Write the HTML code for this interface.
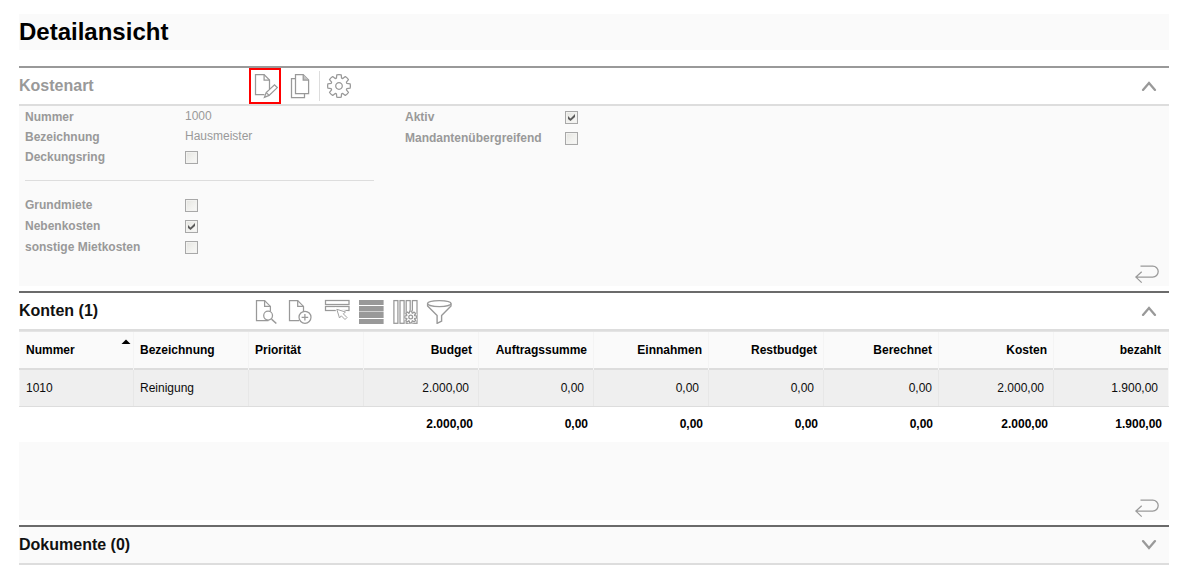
<!DOCTYPE html>
<html lang="de">
<head>
<meta charset="utf-8">
<title>Detailansicht</title>
<style>
html,body{margin:0;padding:0;background:#fff;}
body{width:1186px;height:571px;position:relative;overflow:hidden;font-family:"Liberation Sans",Arial,sans-serif;font-size:12px;color:#0c0c0c;}
.abs{position:absolute;}
.t{position:absolute;white-space:nowrap;line-height:14px;height:14px;}
.bg{position:absolute;left:19px;width:1150px;}
h1{position:absolute;left:19px;top:14px;width:1150px;height:36px;margin:0;background:#fafafa;font-size:24px;font-weight:bold;line-height:36px;color:#000;}
.sh{position:absolute;left:19px;font-size:16px;font-weight:bold;line-height:36px;height:36px;margin:0;}
.lbl{font-weight:bold;color:#999;}
.val{color:#999;}
.cb{position:absolute;width:11px;height:11px;border:1px solid #a8a8a8;background:linear-gradient(135deg,#e4e4e0 0%,#f1f1ee 55%,#f8f8f7 100%);box-shadow:inset 0 0 0 1px #f2f2f0;}
.cb svg{position:absolute;left:0;top:0;}
.th{font-weight:bold;color:#000;}
.r{text-align:right;}
.vline{position:absolute;width:1px;}
svg{position:absolute;overflow:visible;}
</style>
</head>
<body>

<h1><span style="position:relative;left:0px;">Detailansicht</span></h1>

<!-- ================= Section 1: Kostenart ================= -->
<div class="bg" style="top:66px;height:2px;background:#999;"></div>
<div class="bg" style="top:104px;height:2px;background:#dddddd;"></div>
<div class="bg" style="top:106px;height:180px;background:#fafafa;"></div>
<h2 class="sh" style="top:68px;color:#999;">Kostenart</h2>

<!-- toolbar -->
<div class="abs" style="left:249px;top:68px;width:28px;height:32px;border:2px solid #ff0000;"></div>
<svg id="ic-edit" style="left:253px;top:72px;" width="28" height="28" viewBox="253 72 28 28" fill="none" stroke="#999" stroke-width="1.25">
  <path d="M264.5 94.5H255.5V74.6H264.1L269.5 80V89"/>
  <path d="M264.1 74.6V80H269.5"/>
  <path d="M264.4 97.4L266.2 92.6L274.5 84.8L277.3 87.6L269.1 95.4Z"/>
  <path d="M266.2 92.6L269.1 95.4"/>
</svg>
<svg id="ic-copy" style="left:288px;top:72px;" width="28" height="28" viewBox="288 72 28 28" fill="none" stroke="#999" stroke-width="1.25">
  <path d="M295.5 78.5H291.5V97.5H304.5V94"/>
  <path d="M295.5 74.6H303.2L308.6 80V93.5H295.5Z"/>
  <path d="M303.2 74.6V80H308.6" fill="#c4c4c4"/>
</svg>
<div class="vline" style="left:319px;top:71px;height:30px;background:#ddd;"></div>
<svg id="ic-gear" style="left:326px;top:73px;" width="26" height="26" viewBox="-13 -13 26 26" fill="none" stroke="#999" stroke-width="1.25">
  <circle r="3.3"/>
  <path d="M7.89 -2.56L11.18 -2.22A11.4 11.4 0 0 1 11.18 2.22L7.89 2.56A8.3 8.3 0 0 1 7.40 3.77L7.40 3.77L9.48 6.33A11.4 11.4 0 0 1 6.33 9.48L3.77 7.40A8.3 8.3 0 0 1 2.56 7.89L2.56 7.89L2.22 11.18A11.4 11.4 0 0 1 -2.22 11.18L-2.56 7.89A8.3 8.3 0 0 1 -3.77 7.40L-3.77 7.40L-6.33 9.48A11.4 11.4 0 0 1 -9.48 6.33L-7.40 3.77A8.3 8.3 0 0 1 -7.89 2.56L-7.89 2.56L-11.18 2.22A11.4 11.4 0 0 1 -11.18 -2.22L-7.89 -2.56A8.3 8.3 0 0 1 -7.40 -3.77L-7.40 -3.77L-9.48 -6.33A11.4 11.4 0 0 1 -6.33 -9.48L-3.77 -7.40A8.3 8.3 0 0 1 -2.56 -7.89L-2.56 -7.89L-2.22 -11.18A11.4 11.4 0 0 1 2.22 -11.18L2.56 -7.89A8.3 8.3 0 0 1 3.77 -7.40L3.77 -7.40L6.33 -9.48A11.4 11.4 0 0 1 9.48 -6.33L7.40 -3.77A8.3 8.3 0 0 1 7.89 -2.56Z" stroke-linejoin="round"/>
</svg>
<svg style="left:1141px;top:80px;" width="16" height="12" viewBox="0 0 16 12" fill="none" stroke="#999" stroke-width="2.3" stroke-linecap="round"><path d="M2 9.9L8 3L14 9.9"/></svg>

<!-- left column -->
<div class="t lbl" style="left:25px;top:110px;">Nummer</div>
<div class="t val" style="left:185px;top:109px;">1000</div>
<div class="t lbl" style="left:25px;top:130px;">Bezeichnung</div>
<div class="t val" style="left:185px;top:129px;">Hausmeister</div>
<div class="t lbl" style="left:25px;top:150px;">Deckungsring</div>
<div class="cb" style="left:185px;top:151px;"></div>
<div class="abs" style="left:25px;top:180px;width:349px;height:1px;background:#ddd;"></div>
<div class="t lbl" style="left:25px;top:198px;">Grundmiete</div>
<div class="cb" style="left:185px;top:199px;"></div>
<div class="t lbl" style="left:25px;top:219px;">Nebenkosten</div>
<div class="cb" style="left:185px;top:220px;"><svg width="11" height="11" viewBox="0 0 11 11"><path d="M2 4L4.5 6.5L9 2V5L4.5 9L2 7Z" fill="#5c5c5c"/></svg></div>
<div class="t lbl" style="left:25px;top:240px;">sonstige Mietkosten</div>
<div class="cb" style="left:185px;top:241px;"></div>

<!-- right column -->
<div class="t lbl" style="left:405px;top:110px;">Aktiv</div>
<div class="cb" style="left:565px;top:111px;"><svg width="11" height="11" viewBox="0 0 11 11"><path d="M2 4L4.5 6.5L9 2V5L4.5 9L2 7Z" fill="#5c5c5c"/></svg></div>
<div class="t lbl" style="left:405px;top:131px;">Mandantenübergreifend</div>
<div class="cb" style="left:565px;top:132px;"></div>

<svg class="ret" style="left:1134px;top:264px;" width="26" height="20" viewBox="1134 264 26 20" fill="none" stroke="#999" stroke-width="1.25"><path d="M1140.5 266.1H1152.7A5.5 5.5 0 0 1 1152.7 277.1H1136M1141.7 271.8L1135.9 277.1L1141.7 282.6"/></svg>

<!-- ================= Section 2: Konten ================= -->
<div class="bg" style="top:291px;height:2px;background:#6b6b6b;"></div>
<div class="bg" style="top:329px;height:2px;background:#dddddd;"></div>
<h2 class="sh" style="top:293px;color:#111;">Konten (1)</h2>
<svg style="left:1141px;top:305px;" width="16" height="12" viewBox="0 0 16 12" fill="none" stroke="#999" stroke-width="2.3" stroke-linecap="round"><path d="M2 9.9L8 3L14 9.9"/></svg>

<!-- toolbar 2 -->
<svg id="ic-search" style="left:254px;top:298px;" width="26" height="28" viewBox="254 298 26 28" fill="none" stroke="#999" stroke-width="1.25">
  <path d="M268.5 320.5H256.5V300.6H264.6L270.4 306.4V311.3"/>
  <path d="M264.6 300.6V306.4H270.4"/>
  <circle cx="268.1" cy="315.6" r="4.4" fill="#fff"/>
  <path d="M271.5 319.1L276.3 323.5" stroke-width="1.45"/>
</svg>
<svg id="ic-add" style="left:287px;top:298px;" width="28" height="28" viewBox="287 298 28 28" fill="none" stroke="#999" stroke-width="1.25">
  <path d="M299 320.5H289.5V300.6H297.7L303.5 306.4V311.2"/>
  <path d="M297.7 300.6V306.4H303.5"/>
  <circle cx="305" cy="317.3" r="6"/>
  <path d="M304.9 314V320.6M301.6 317.3H308.2"/>
</svg>
<svg id="ic-rowsel" style="left:324px;top:298px;" width="28" height="28" viewBox="324 298 28 28" fill="none" stroke="#999" stroke-width="1.25">
  <rect x="325.5" y="300.5" width="23.5" height="4"/>
  <rect x="325.5" y="306.5" width="23.5" height="4" />
  <path d="M336.8 309.3L339.5 318L341.3 315.8L345 319.5L347 317.5L343.3 313.8L345.5 312Z" fill="#fff" stroke="#fff" stroke-width="2.6"/>
  <path d="M336.8 309.3L339.5 318L341.3 315.8L345 319.5L347 317.5L343.3 313.8L345.5 312Z" fill="#fff" stroke="#a2a2a2" stroke-width="1"/>
</svg>
<svg id="ic-rows" style="left:358px;top:298px;" width="28" height="28" viewBox="358 298 28 28">
  <rect x="359" y="300" width="24.6" height="5" fill="#999"/>
  <rect x="359" y="306" width="24.6" height="5" fill="#999"/>
  <rect x="359" y="311" width="24.6" height="1" fill="#d0d0d0"/>
  <rect x="359" y="312" width="24.6" height="6" fill="#999"/>
  <rect x="359" y="319" width="24.6" height="5" fill="#999"/>
</svg>
<svg id="ic-cols" style="left:392px;top:298px;" width="28" height="28" viewBox="392 298 28 28" fill="none" stroke="#999" stroke-width="1.25">
  <rect x="393.9" y="300.6" width="4" height="22.7"/>
  <rect x="400" y="300.6" width="4.1" height="22.7"/>
  <rect x="406.2" y="300.6" width="4" height="22.7"/>
  <rect x="412.4" y="300.6" width="4.6" height="22.7"/>
  <g transform="translate(410.7 317)"><circle r="6.6" fill="#fff" stroke="none"/><path d="M3.99 -1.30L5.79 -1.15A5.9 5.9 0 0 1 5.79 1.15L3.99 1.30A4.2 4.2 0 0 1 3.74 1.91L3.74 1.91L4.91 3.28A5.9 5.9 0 0 1 3.28 4.91L1.91 3.74A4.2 4.2 0 0 1 1.30 3.99L1.30 3.99L1.15 5.79A5.9 5.9 0 0 1 -1.15 5.79L-1.30 3.99A4.2 4.2 0 0 1 -1.91 3.74L-1.91 3.74L-3.28 4.91A5.9 5.9 0 0 1 -4.91 3.28L-3.74 1.91A4.2 4.2 0 0 1 -3.99 1.30L-3.99 1.30L-5.79 1.15A5.9 5.9 0 0 1 -5.79 -1.15L-3.99 -1.30A4.2 4.2 0 0 1 -3.74 -1.91L-3.74 -1.91L-4.91 -3.28A5.9 5.9 0 0 1 -3.28 -4.91L-1.91 -3.74A4.2 4.2 0 0 1 -1.30 -3.99L-1.30 -3.99L-1.15 -5.79A5.9 5.9 0 0 1 1.15 -5.79L1.30 -3.99A4.2 4.2 0 0 1 1.91 -3.74L1.91 -3.74L3.28 -4.91A5.9 5.9 0 0 1 4.91 -3.28L3.74 -1.91A4.2 4.2 0 0 1 3.99 -1.30Z" fill="#fff" stroke-linejoin="round"/><circle r="1.9"/></g>
</svg>
<svg id="ic-funnel" style="left:426px;top:298px;" width="28" height="28" viewBox="426 298 28 28" fill="none" stroke="#999" stroke-width="1.25">
  <ellipse cx="439.3" cy="303.5" rx="11.8" ry="3"/>
  <path d="M427.6 303.5V306L437.1 315.4V323.4L441.6 321.2V315.4L451 306V303.5" stroke-width="1.4" stroke-linejoin="round"/>
</svg>

<!-- table -->
<div class="bg" style="top:331px;height:37px;background:#fafafa;"></div>
<div class="bg" style="top:331px;height:1px;background:#e4e4e4;"></div>
<div class="bg" style="top:368px;height:2px;background:#dddddd;"></div>
<div class="bg" style="top:370px;height:36px;background:#efefef;"></div>
<div class="bg" style="top:406px;height:1px;background:#dddddd;"></div>
<div class="bg" style="top:442px;height:78px;background:#fafafa;"></div>
<div id="cols">
<div class="vline" style="left:133px;top:332px;height:38px;background:#f4f4f4;"></div><div class="vline" style="left:133px;top:370px;height:36px;background:#e7e7e7;"></div>
<div class="vline" style="left:248px;top:332px;height:38px;background:#f4f4f4;"></div><div class="vline" style="left:248px;top:370px;height:36px;background:#e7e7e7;"></div>
<div class="vline" style="left:363px;top:332px;height:38px;background:#f4f4f4;"></div><div class="vline" style="left:363px;top:370px;height:36px;background:#e7e7e7;"></div>
<div class="vline" style="left:478px;top:332px;height:38px;background:#f4f4f4;"></div><div class="vline" style="left:478px;top:370px;height:36px;background:#e7e7e7;"></div>
<div class="vline" style="left:593px;top:332px;height:38px;background:#f4f4f4;"></div><div class="vline" style="left:593px;top:370px;height:36px;background:#e7e7e7;"></div>
<div class="vline" style="left:708px;top:332px;height:38px;background:#f4f4f4;"></div><div class="vline" style="left:708px;top:370px;height:36px;background:#e7e7e7;"></div>
<div class="vline" style="left:823px;top:332px;height:38px;background:#f4f4f4;"></div><div class="vline" style="left:823px;top:370px;height:36px;background:#e7e7e7;"></div>
<div class="vline" style="left:938px;top:332px;height:38px;background:#f4f4f4;"></div><div class="vline" style="left:938px;top:370px;height:36px;background:#e7e7e7;"></div>
<div class="vline" style="left:1053px;top:332px;height:38px;background:#f4f4f4;"></div><div class="vline" style="left:1053px;top:370px;height:36px;background:#e7e7e7;"></div>
<div class="vline" style="left:1168px;top:332px;height:74px;background:#f8f8f8;"></div>
<div class="vline" style="left:19px;top:332px;height:36px;background:#fdfdfd;"></div>
<div class="vline" style="left:19px;top:370px;height:36px;background:#f6f6f6;"></div>
</div>

<svg style="left:121px;top:339px;" width="10" height="6" viewBox="0 0 10 6"><path d="M0.5 5L5 0.5L9.5 5Z" fill="#000"/></svg>

<div class="t th" style="left:26px;top:343px;">Nummer</div>
<div class="t th" style="left:140px;top:343px;">Bezeichnung</div>
<div class="t th" style="left:255px;top:343px;">Priorität</div>
<div class="t th r" style="left:364px;width:108px;top:343px;">Budget</div>
<div class="t th r" style="left:479px;width:108px;top:343px;">Auftragssumme</div>
<div class="t th r" style="left:594px;width:108px;top:343px;">Einnahmen</div>
<div class="t th r" style="left:709px;width:108px;top:343px;">Restbudget</div>
<div class="t th r" style="left:824px;width:108px;top:343px;">Berechnet</div>
<div class="t th r" style="left:939px;width:108px;top:343px;">Kosten</div>
<div class="t th r" style="left:1053px;width:108px;top:343px;">bezahlt</div>

<div class="t" style="left:26px;top:381px;">1010</div>
<div class="t" style="left:140px;top:381px;">Reinigung</div>
<div class="t r" style="left:364px;width:105px;top:381px;">2.000,00</div>
<div class="t r" style="left:479px;width:105px;top:381px;">0,00</div>
<div class="t r" style="left:594px;width:105px;top:381px;">0,00</div>
<div class="t r" style="left:709px;width:105px;top:381px;">0,00</div>
<div class="t r" style="left:824px;width:108px;top:381px;">0,00</div>
<div class="t r" style="left:939px;width:105px;top:381px;">2.000,00</div>
<div class="t r" style="left:1053px;width:105px;top:381px;">1.900,00</div>

<div class="t th r" style="left:364px;width:109px;top:417px;">2.000,00</div>
<div class="t th r" style="left:479px;width:109px;top:417px;">0,00</div>
<div class="t th r" style="left:594px;width:109px;top:417px;">0,00</div>
<div class="t th r" style="left:709px;width:109px;top:417px;">0,00</div>
<div class="t th r" style="left:824px;width:109px;top:417px;">0,00</div>
<div class="t th r" style="left:939px;width:109px;top:417px;">2.000,00</div>
<div class="t th r" style="left:1053px;width:109px;top:417px;">1.900,00</div>

<svg class="ret" style="left:1134px;top:498px;" width="26" height="20" viewBox="1134 264 26 20" fill="none" stroke="#999" stroke-width="1.25"><path d="M1140.5 266.1H1152.7A5.5 5.5 0 0 1 1152.7 277.1H1136M1141.7 271.8L1135.9 277.1L1141.7 282.6"/></svg>

<!-- ================= Section 3: Dokumente ================= -->
<div class="bg" style="top:525px;height:2px;background:#6b6b6b;"></div>
<div class="bg" style="top:527px;height:36px;background:#fafafa;"></div>
<div class="bg" style="top:563px;height:2px;background:#dddddd;"></div>
<h2 class="sh" style="top:527px;color:#111;">Dokumente (0)</h2>
<svg style="left:1141px;top:539px;" width="16" height="12" viewBox="0 0 16 12" fill="none" stroke="#999" stroke-width="2.3" stroke-linecap="round"><path d="M2 2.1L8 9L14 2.1"/></svg>


</body>
</html>
